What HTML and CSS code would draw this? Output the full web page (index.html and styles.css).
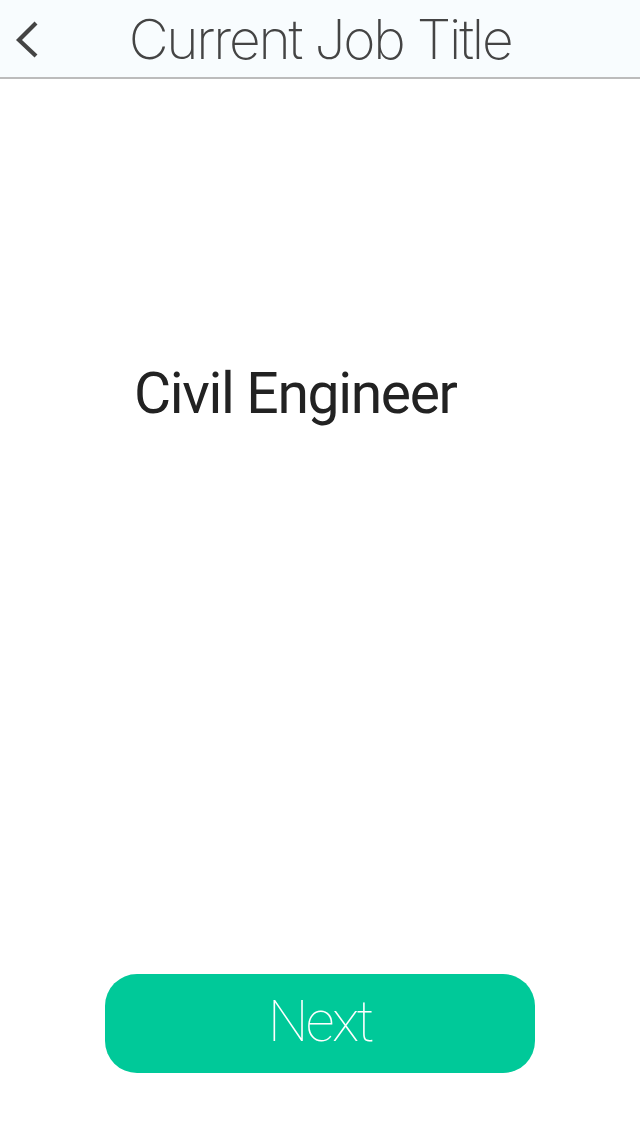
FILE: index.html
```html
<!DOCTYPE html>
<html>
<head>
<meta charset="utf-8">
<link rel="stylesheet" href="styles.css">
</head>
<body>
<div class="screen">
  <header class="nav">
    <button class="back" aria-label="Back">
      <svg width="26" height="38" viewBox="0 0 26 38"><polyline points="22,3 5,20 22,36" fill="none" stroke="#444" stroke-width="4.2"/></svg>
    </button>
    <h1 class="title">Current Job Title</h1>
  </header>
  <main class="content">
    <p class="value">Civil Engineer</p>
  </main>
  <footer class="actions">
    <button class="next">Next</button>
  </footer>
</div>
</body>
</html>
```
FILE: styles.css
```css
* { box-sizing: border-box; }
html, body { margin: 0; padding: 0; background: #fff; }
.screen {
  width: 640px;
  height: 1136px;
  display: flex;
  flex-direction: column;
  font-family: Roboto, "Liberation Sans", sans-serif;
}
.nav {
  height: 79px;
  background: #f8fcfe;
  border-bottom: 2px solid #bcbcbc;
  display: flex;
  align-items: center;
  position: relative;
}
.back {
  position: absolute;
  left: 14px;
  top: 20px;
  background: none;
  border: 0;
  padding: 0;
  display: flex;
}
.title {
  margin: 0;
  width: 100%;
  text-align: center;
  font-family: Inter, "Liberation Sans", sans-serif;
  font-weight: 200;
  font-size: 55px;
  color: #444;
  letter-spacing: -2.2px;
  padding-bottom: 0;
}
.content {
  flex: 1;
  padding-left: 134px;
}
.value {
  margin: 281px 0 0;
  font-size: 57px;
  font-weight: 400;
  color: #222;
  letter-spacing: -1.35px;
}
.actions {
  display: flex;
  justify-content: center;
  padding-bottom: 63px;
}
.next {
  width: 430px;
  height: 99px;
  border: 0;
  border-radius: 32px;
  background: #00c999;
  color: #fff;
  font-family: Roboto, "Liberation Sans", sans-serif;
  font-weight: 100;
  font-size: 57px;
  letter-spacing: -2.6px;
  padding: 0 0 4px;
}
```
